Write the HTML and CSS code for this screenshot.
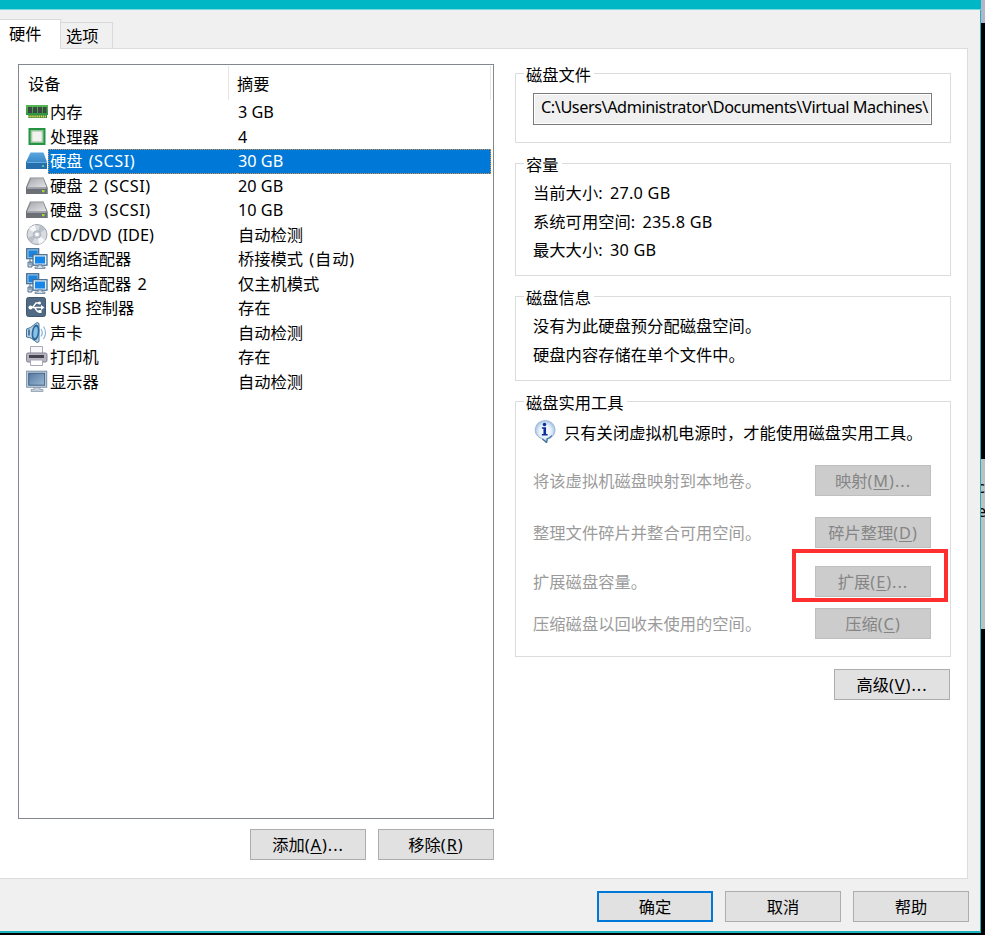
FILE: index.html
```html
<!DOCTYPE html>
<html lang="zh-CN">
<head>
<meta charset="utf-8">
<title>虚拟机设置</title>
<link rel="stylesheet" href="styles.css">
</head>
<body>
<svg width="0" height="0" class="defs" aria-hidden="true">
  <defs>
    <linearGradient id="gBlue" x1="0" y1="0" x2="0" y2="1"><stop offset="0" stop-color="#5ba6e0"/><stop offset="1" stop-color="#2574b8"/></linearGradient>
    <linearGradient id="gGrey" x1="0" y1="0" x2="1" y2="1"><stop offset="0" stop-color="#a4a7ad"/><stop offset="1" stop-color="#e2e3e5"/></linearGradient>
    <linearGradient id="gGreen" x1="0" y1="0" x2="0" y2="1"><stop offset="0" stop-color="#58b958"/><stop offset="1" stop-color="#208738"/></linearGradient>
    <linearGradient id="gScreen" x1="0" y1="0" x2="1" y2="1"><stop offset="0" stop-color="#54799f"/><stop offset="1" stop-color="#9bb9d5"/></linearGradient>
    <radialGradient id="gInfo"><stop offset="0" stop-color="#ffffff"/><stop offset=".6" stop-color="#e5f0fb"/><stop offset="1" stop-color="#a9c6e6"/></radialGradient>
    <symbol id="net" viewBox="0 0 22 22">
      <rect x=".7" y=".7" width="12" height="10" fill="#8fc3ea" stroke="#42688c" stroke-width="1.2"/>
      <rect x="2.5" y="2.5" width="9" height="6.500" fill="#1d83dc"/>
      <path d="M4 11v6M2 14h4v5H2z" fill="#d2dde7" stroke="#537391"/>
      <rect x="7" y="6.700" width="14" height="10.500" fill="#e5f0f8" stroke="#42688c" stroke-width="1.2"/>
      <rect x="9" y="8.500" width="10" height="7" fill="#1686e8"/>
      <path d="M12 17h4v2h3v1.500H9V19h3z" fill="#d8e1e9" stroke="#4f6e8b" stroke-width=".7"/>
    </symbol>
    <symbol id="disk" viewBox="0 0 22 20">
      <path d="M4 1.500h13.500L21.500 11v7H0v-7z" fill="#85888e"/>
      <path d="M5 2.300h12l3.300 8.700H1.500z" fill="url(#gGrey)"/>
      <path d="M0 11.500h21.500V18H0z" fill="#6c7076"/><path d="M1 12h19.500" stroke="#c9cbd0"/>
      <rect x="16" y="14" width="2.500" height="2.200" fill="#9be02e"/>
    </symbol>
  </defs>
</svg>
<div class="screen">
  <div class="window">
    <div class="titlebar"></div>
    <div class="tabs"><div class="tab active">硬件</div><div class="tab">选项</div></div>
    <main class="panel">
      <section class="left">
        <div class="list">
          <div class="head"><span class="name">设备</span><span class="sum">摘要</span></div>
          <div class="row"><svg class="ico" viewBox="0 0 22 20"><path d="M0 3h22v10h-1v3H2v-3H0z" fill="url(#gGreen)"/><path d="M2 5h4v6H2zM7 5h4v6H7zM12 5h4v6h-4zM17 5h3.500v6H17z" fill="#3e4742"/><path d="M2 14.500h18" stroke="#e3cb55" stroke-width="2" stroke-dasharray="1.500 .6"/></svg><span class="name">内存</span><span class="sum">3 GB</span></div>
          <div class="row"><svg class="ico" viewBox="0 0 22 20"><rect x="3.500" y="2" width="15" height="15" fill="#8fc694" stroke="#249344" stroke-width="2"/><rect x="6" y="4.500" width="10" height="10" rx="1" fill="#f2f3ee" stroke="#cbd6c9"/></svg><span class="name">处理器</span><span class="sum">4</span></div>
          <div class="row selected"><svg class="ico" viewBox="0 0 22 20"><path d="M4.500 1.500h13L21 11v7H0v-7z" fill="url(#gBlue)"/><path d="M0 11h21v7H0z" fill="#266fac"/><path d="M1 11.500h20" stroke="#68b0e3"/><rect x="16" y="14" width="2" height="2" fill="#5bc1a7"/></svg><span class="name">硬盘 <span class="lat">(SCSI)</span></span><span class="sum">30 GB</span></div>
          <div class="row"><svg class="ico"><use href="#disk"/></svg><span class="name">硬盘 2 <span class="lat">(SCSI)</span></span><span class="sum">20 GB</span></div>
          <div class="row"><svg class="ico"><use href="#disk"/></svg><span class="name">硬盘 3 <span class="lat">(SCSI)</span></span><span class="sum">10 GB</span></div>
          <div class="row"><svg class="ico tall" viewBox="0 0 22 22"><circle cx="11" cy="10.500" r="10" fill="#d8dbe0" stroke="#9fa4ac"/><path d="M11 10.500L3 5A10 10 0 0 1 9 1zM11 10.500l8 5.500a10 10 0 0 1-6 4z" fill="#f7f8fa"/><path d="M11 10.500l3-9a10 10 0 0 1 5 4zM11 10.500l-9 3a10 10 0 0 0 4 5z" fill="#b9c0c9"/><circle cx="11" cy="10.500" r="3.700" fill="#c6ccd5" stroke="#aab1bb"/><circle cx="11" cy="10.500" r="1.800" fill="#fff"/></svg><span class="name">CD/DVD (IDE)</span><span class="sum">自动检测</span></div>
          <div class="row"><svg class="ico tall"><use href="#net"/></svg><span class="name">网络适配器</span><span class="sum">桥接模式 <span class="auto">(自动)</span></span></div>
          <div class="row"><svg class="ico tall"><use href="#net"/></svg><span class="name">网络适配器 2</span><span class="sum">仅主机模式</span></div>
          <div class="row"><svg class="ico" viewBox="0 0 22 20"><rect x=".5" y="-.5" width="19" height="19" rx="2" fill="#506a84" stroke="#405971"/><path d="M4 9.500h12M6.500 9.500L10 5h3M8.500 9.500l3 4h2" fill="none" stroke="#fff" stroke-width="1.300"/><circle cx="4.500" cy="9.500" r="2" fill="#fff"/><path d="M15 7l3.500 2.500L15 12z" fill="#fff"/><circle cx="13.500" cy="5" r="1.500" fill="#fff"/><path d="M12.500 12h3v3h-3z" fill="#fff"/></svg><span class="name usb">USB 控制器</span><span class="sum">存在</span></div>
          <div class="row"><svg class="ico tall" viewBox="0 0 22 22"><path d="M.5 7l4-1.500 6.500-5 2 1v18l-2 1L5 16l-4.500-1z" fill="#b9d2e7" stroke="#45779f"/><ellipse cx="9.500" cy="10.500" rx="3.800" ry="8" transform="rotate(8 9.500 10.500)" fill="#2f6697"/><ellipse cx="9.500" cy="10.500" rx="2.200" ry="5.800" transform="rotate(8 9.500 10.500)" fill="#84c2ee"/><path d="M3 7.500v6" stroke="#2a618e" stroke-width="1.500"/><path d="M15 7q2.500 3.500 0 7.500M17.500 4.500q4 6 0 12.500" fill="none" stroke="#8bb4d7" stroke-width="1.200"/></svg><span class="name">声卡</span><span class="sum">自动检测</span></div>
          <div class="row"><svg class="ico" viewBox="0 0 22 20"><path d="M4.500-.5h12v8h-12z" fill="#f8f8fb" stroke="#aaa6b6"/><rect x=".5" y="6" width="20.500" height="9" rx="1.500" fill="#b6b5bf" stroke="#85838f"/><path d="M3 8h15v3H3z" fill="#44444c"/><path d="M4.500 13h12v5.500h-12z" fill="#fff" stroke="#aaa6b6"/></svg><span class="name">打印机</span><span class="sum">存在</span></div>
          <div class="row"><svg class="ico tall" viewBox="0 0 22 22"><rect x=".7" y=".2" width="20" height="16" fill="#d6dfe8" stroke="#718ba3"/><rect x="2.700" y="2.200" width="16" height="12" fill="url(#gScreen)" stroke="#3c5f82"/><path d="M8 16.500h6v2h3v2H5v-2h3z" fill="#c7d0da" stroke="#7f94a8" stroke-width=".7"/></svg><span class="name">显示器</span><span class="sum">自动检测</span></div>
        </div>
        <div class="actions"><button>添加<span class="key">(<u>A</u>)...</span></button><button>移除<span class="key">(<u>R</u>)</span></button></div>
      </section>
      <section class="right">
        <div class="group file"><h2>磁盘文件</h2><div class="path">C:\Users\Administrator\Documents\Virtual Machines\</div></div>
        <div class="group capacity"><h2>容量</h2><p>当前大小: <span class="val">27.0 GB</span></p><p>系统可用空间: <span class="val">235.8 GB</span></p><p>最大大小: <span class="val">30 GB</span></p></div>
        <div class="group info"><h2>磁盘信息</h2><p>没有为此硬盘预分配磁盘空间。</p><p>硬盘内容存储在单个文件中。</p></div>
        <div class="group tools"><h2>磁盘实用工具</h2>
          <div class="notice"><svg viewBox="0 0 22 22"><path d="M11 .5a10 9 0 0 1 3 17.600L13 21.500 9 18A10 9 0 0 1 11 .5z" fill="url(#gInfo)" stroke="#a3bbd9"/><path d="M18 15q-2 2.500-4.500 3L13 21.500 9 18.200" fill="none" stroke="#3f7099" stroke-width="1.200"/><circle cx="11" cy="4.300" r="1.700" fill="#102c9d"/><path d="M8.500 7h4v6.500H14v1.300H8.500v-1.300H10V8.300H8.500z" fill="#102c9d"/></svg><span>只有关闭虚拟机电源时，才能使用磁盘实用工具。</span></div>
          <div class="tool"><span>将该虚拟机磁盘映射到本地卷。</span><button disabled>映射<span class="key">(<u>M</u>)...</span></button></div>
          <div class="tool"><span>整理文件碎片并整合可用空间。</span><button disabled>碎片整理<span class="key">(<u>D</u>)</span></button></div>
          <div class="tool marked"><span>扩展磁盘容量。</span><button disabled>扩展<span class="key">(<u>E</u>)...</span></button></div>
          <div class="tool"><span>压缩磁盘以回收未使用的空间。</span><button disabled>压缩<span class="key">(<u>C</u>)</span></button></div>
        </div>
        <button class="advanced">高级<span class="key">(<u>V</u>)...</span></button>
      </section>
    </main>
    <footer><button class="primary">确定</button><button>取消</button><button>帮助</button></footer>
  </div>
  <div class="behind"><div class="sliver"><span>c</span><span>e</span></div></div>
</div>
</body>
</html>
```
FILE: styles.css
```css
*, *::before, *::after { box-sizing: border-box; }
body {
  margin: 0;
  background: #000;
  color: #000;
  font: 16.25px/24px "Noto Sans", "Noto Sans CJK SC", sans-serif;
  white-space: nowrap;
}
.defs { position: absolute; }
.screen { display: flex; width: 985px; height: 935px; overflow: hidden; }
.window {
  display: flex;
  flex: none;
  flex-direction: column;
  width: 981px;
  height: 933px;
  background: #f0f0f0;
  border-right: 1px solid #18b3bd;
  border-bottom: 2px solid #18b3bd;
}
.titlebar { flex: none; height: 10px; background: #00b7c6; border-bottom: 1px solid #7cd8df; margin-right: -1px; }
.tabs { display: flex; align-items: flex-end; height: 38px; flex: none; }
.tab { width: 52px; height: 26px; padding: 1px 0 0 5px; border: 1px solid #d9d9d9; border-width: 1px 1px 0 0; }
.tab.active { width: 61px; height: 30px; margin-bottom: -1px; padding: 2px 0 0 9px; background: #fff; position: relative; }
.panel {
  display: flex;
  flex: none;
  gap: 21px;
  width: 968px;
  height: 831px;
  padding: 15px 16px 0 18px;
  background: #fff;
  border: 1px solid #dcdcdc;
  border-width: 1px 1px 1px 0;
}
.left { width: 476px; }
.list { height: 755px; border: 1px solid #828790; padding: 1px 2px 0 7px; }
.head { display: flex; height: 34px; border-right: 1px solid #e5e5e5; }
.head .name { width: 203px; padding: 6px 0 0 2px; border-right: 1px solid #e5e5e5; }
.head .sum { padding: 6px 0 0 8px; }
.row { display: flex; align-items: center; height: 24.5px; }
.ico { flex: none; width: 22px; height: 20px; overflow: visible; }
.ico.tall { height: 22px; }
.row .name { width: 189px; padding-left: 2px; word-spacing: 2px; }
.row .usb { word-spacing: 0; }
.row .name, .row .sum { height: 24.5px; line-height: 25px; }
.row .sum { flex: 1; padding-left: 1px; }
.lat { letter-spacing: .5px; }
.auto { margin-left: 2px; letter-spacing: .9px; }
.selected .name, .selected .sum { background: #0078d7; color: #fff; border: 1px dotted #df934d; border-width: 1px 0; line-height: 23px; }
.selected .name { border-left-width: 1px; padding-left: 1px; }
.selected .sum { border-right-width: 1px; }
button {
  width: 116px;
  height: 31px;
  padding: 1px 0 0;
  background: #e1e1e1;
  border: 1px solid #adadad;
  color: #000;
  font: inherit;
  line-height: 26px;
}
.key { letter-spacing: 1px; }
u { text-underline-offset: 2px; text-decoration-thickness: 1px; }
.actions { display: flex; justify-content: flex-end; gap: 12px; margin: 10px 0 0; }
.right { display: flex; flex-direction: column; width: 436px; padding-top: 9px; }
.group { position: relative; flex: none; border: 1px solid #dcdcdc; padding-left: 17px; margin-bottom: 20px; }
.group h2 { position: absolute; left: 8px; top: -11px; margin: 0; padding: 0 3px 0 2px; background: #fff; font: inherit; }
.file { height: 70px; }
.path { width: 399px; height: 32px; margin-top: 19px; padding: 0 0 0 7px; border: 1px solid #7a7a7a; box-shadow: inset 0 0 0 1px #fff; background: #f0f0f0; overflow: hidden; line-height: 26px; letter-spacing: -.43px; }
.capacity { height: 113px; padding-top: 15px; }
.group p { margin: 0; line-height: 28.7px; letter-spacing: .05px; }
.val { margin-left: 3px; letter-spacing: .25px; }
.info { height: 85px; padding-top: 15px; }
.tools { height: 256px; margin-bottom: 12px; padding-top: 16px; }
.notice { display: flex; align-items: center; height: 28px; }
.notice svg { width: 23px; height: 23px; margin: -2px 8px 0 0; }
.notice span { padding-top: 1px; letter-spacing: .05px; }
.tool { display: flex; justify-content: space-between; align-items: center; height: 31px; margin: 19px 19px 0 0; color: #9b9b9b; position: relative; }
.tool + .tool { margin-top: 21px; }
.tool + .marked { margin-top: 18px; }
.marked + .tool { margin-top: 11px; }
.tool > span { padding-top: 1px; letter-spacing: .05px; }
button:disabled { background: #ccc; border-color: #bfbfbf; color: #858585; }
.marked::after { content: ""; position: absolute; right: -17px; top: -17px; width: 156px; height: 53px; border: 4px solid #fc3030; }
.advanced { align-self: flex-end; margin-right: 1px; }
footer { display: flex; justify-content: flex-end; gap: 12px; padding: 12px 11px 0 0; }
.primary { border: 2px solid #0078d7; padding-top: 0; }
.behind { flex: 1; border-top: 23px solid #b4b4ca; }
.sliver { display: flex; flex-direction: column; width: 4px; height: 170px; margin-top: 436px; padding-top: 16px; overflow: hidden; background: #c0c0c0; }
.sliver span { margin-left: -4px; }
```
